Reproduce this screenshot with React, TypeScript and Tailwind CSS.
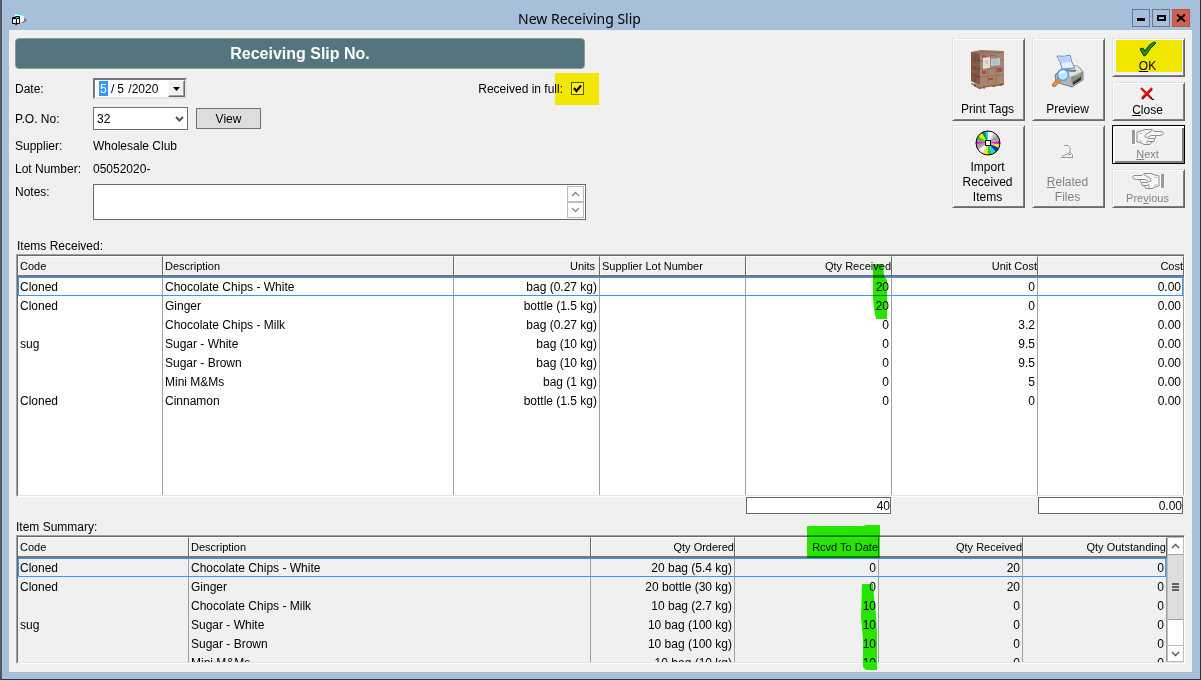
import { useState } from "react";
import type { ReactNode } from "react";
import { clsx } from "clsx";

type Align = "left" | "right";

type Column = {
  title: string;
  width?: string;
  align: Align;
  headPad?: string;
};

const RECEIVED_COLUMNS: Column[] = [
  { title: "Code", width: "w-[145px]", align: "left" },
  { title: "Description", align: "left" },
  { title: "Units", width: "w-[146px]", align: "right", headPad: "pr-[4px]" },
  { title: "Supplier Lot Number", width: "w-[146px]", align: "left" },
  { title: "Qty Received", width: "w-[146px]", align: "right" },
  { title: "Unit Cost", width: "w-[146px]", align: "right" },
  { title: "Cost", width: "w-[146px]", align: "right" },
];

const RECEIVED_ROWS = [
  ["Cloned", "Chocolate Chips - White", "bag (0.27 kg)", "", "20", "0", "0.00"],
  ["Cloned", "Ginger", "bottle (1.5 kg)", "", "20", "0", "0.00"],
  ["", "Chocolate Chips - Milk", "bag (0.27 kg)", "", "0", "3.2", "0.00"],
  ["sug", "Sugar - White", "bag (10 kg)", "", "0", "9.5", "0.00"],
  ["", "Sugar - Brown", "bag (10 kg)", "", "0", "9.5", "0.00"],
  ["", "Mini M&Ms", "bag (1 kg)", "", "0", "5", "0.00"],
  ["Cloned", "Cinnamon", "bottle (1.5 kg)", "", "0", "0", "0.00"],
];

const SUMMARY_COLUMNS: Column[] = [
  { title: "Code", width: "w-[171px]", align: "left" },
  { title: "Description", align: "left" },
  { title: "Qty Ordered", width: "w-[144px]", align: "right" },
  { title: "Rcvd To Date", width: "w-[144px]", align: "right" },
  { title: "Qty Received", width: "w-[144px]", align: "right" },
  { title: "Qty Outstanding", width: "w-[144px]", align: "right" },
];

const SUMMARY_ROWS = [
  ["Cloned", "Chocolate Chips - White", "20 bag (5.4 kg)", "0", "20", "0"],
  ["Cloned", "Ginger", "20 bottle (30 kg)", "0", "20", "0"],
  ["", "Chocolate Chips - Milk", "10 bag (2.7 kg)", "10", "0", "0"],
  ["sug", "Sugar - White", "10 bag (100 kg)", "10", "0", "0"],
  ["", "Sugar - Brown", "10 bag (100 kg)", "10", "0", "0"],
  ["", "Mini M&Ms", "10 bag (10 kg)", "10", "0", "0"],
];

type GridProps = {
  columns: Column[];
  rows: string[][];
  labelledBy: string;
  className?: string;
};

const Grid = ({ columns, rows, labelledBy, className }: GridProps) => (
  <table
    aria-labelledby={labelledBy}
    className={clsx("w-full table-fixed border-separate border-spacing-0", className)}
  >
    <thead>
      <tr className="h-[21px]">
        {columns.map((col) => (
          <th
            key={col.title}
            scope="col"
            className={clsx(
              "h-[21px] border-t border-r border-b-2 border-t-white border-r-[#696969] border-b-[#777777] bg-[#f0f0f0] py-0 pl-[2px] text-[11px] leading-[18px] font-normal whitespace-nowrap",
              "shadow-[inset_1px_0_0_#ffffff]",
              col.width,
              col.align === "right" ? "text-right" : "text-left",
              col.headPad ?? "pr-0"
            )}
          >
            {col.title}
          </th>
        ))}
      </tr>
    </thead>
    <tbody>
      {rows.map((row, r) => (
        <tr key={r} className="h-[19px]">
          {row.map((value, c) => (
            <td
              key={c}
              className={clsx(
                "h-[19px] border-r border-r-[#a0a0a0] pr-[2px] pl-[2px] leading-[15px] whitespace-nowrap",
                r === 0 ? "border-y border-y-[#3399ff] pt-[2px] pb-0" : "pt-[3px] pb-px",
                r === 0 && c === 0 && "shadow-[inset_1px_0_0_#3399ff]",
                r === 0 && c === row.length - 1 && "shadow-[inset_-1px_0_0_#3399ff]",
                columns[c].align === "right" ? "text-right" : "text-left"
              )}
            >
              {value}
            </td>
          ))}
        </tr>
      ))}
      <tr aria-hidden="true">
        {columns.map((col) => (
          <td key={col.title} className="border-r border-r-[#a0a0a0] p-0" />
        ))}
      </tr>
    </tbody>
  </table>
);

const SunkenFrame = ({ children, className }: { children: ReactNode; className: string }) => (
  <div className="border border-t-[#a0a0a0] border-r-white border-b-white border-l-[#a0a0a0]">
    <div
      className={clsx(
        "flex overflow-hidden border-t border-b border-l border-t-[#696969] border-b-[#e3e3e3] border-l-[#696969]",
        className
      )}
    >
      {children}
    </div>
  </div>
);

const Chevron = ({ up = false }: { up?: boolean }) => (
  <svg width="9" height="6" viewBox="0 0 9 6" aria-hidden="true">
    <path
      d={up ? "M1 5 4.5 1.5 8 5" : "M1 1 4.5 4.5 8 1"}
      fill="none"
      stroke="currentColor"
      strokeWidth="1.4"
    />
  </svg>
);

const PalletIcon = () => (
  <svg width="36" height="40" viewBox="0 0 36 40" aria-hidden="true">
    <path d="M1 34 9 39 12 39 12 37 22 36 22 37 34 35 34 31 9 33z" fill="#a98360" />
    <path d="M1 33 9 38 34 34" fill="none" stroke="#7d5b43" strokeWidth="1" />
    <path d="M1 2 10 1 34 1 34 31 10 35 1 31z" fill="#a98470" />
    <path d="M1 2 10 3 10 35 1 31z" fill="#80594a" />
    <path d="M1 2 11 0 33 1 34 3 10 4z" fill="#937363" />
    <path d="M10 11 34 10M10 19 34 18M10 27 34 25M18 4V34M26 3V33" fill="none" stroke="#917060" strokeWidth="1" />
    <path d="M1 9 10 11M1 17 10 19M1 24 10 27M5 3V33" fill="none" stroke="#6c483b" strokeWidth="1" />
    <path d="M3 12 7 13V16L3 15zM2 20 6 21V24L2 23zM12 21H16V24H12zM27 18H32V22H27zM18 28H23V30H18zM12 5H16V7H12zM20 5H24V6H20z" fill="#a8503c" />
    <path d="M13 8 20 7V18L13 19z" fill="#e6e0da" />
    <path d="M21 9 30 8V15L21 16z" fill="#b4c9d2" />
    <path d="M15 11H18M15 13H18M23 11H28M23 13H28" stroke="#a8b4b8" strokeWidth="1" />
    <path d="M5 34V37M14 36V39M24 35V37M31 34V36" stroke="#644637" strokeWidth="1" />
  </svg>
);

const PrinterIcon = () => (
  <svg width="32" height="34" viewBox="0 0 32 34" aria-hidden="true">
    <path d="M7 17 13 12 26 12 31 18 31 26 20 33 4 28 3 21z" fill="#b5b5b5" stroke="#7b7b7b" strokeWidth="1" />
    <path d="M7 17 13 12 26 12 30 18 19 23z" fill="#e0e0e0" />
    <path d="M19 23 30 18V25L20 31z" fill="#8b8b8b" />
    <path d="M21 28 29 23V26L21 31z" fill="#343434" />
    <path d="M23 22 28 20" stroke="#6cd45d" strokeWidth="1.5" />
    <path d="M10 15 25 16 23 18 10 17z" fill="#777a7d" />
    <path d="M5 2Q13 3 18 1Q19 8 23 14L10 15Q9 8 5 2z" fill="#e2efff" stroke="#6889c9" strokeWidth="1" />
    <path d="M7 3Q14 4 17 2Q18 6 19 8L9 9z" fill="#b5d3fc" />
    <path d="M7 26 2 31" stroke="#b4642f" strokeWidth="4" strokeLinecap="round" />
    <path d="M7 26 2 31" stroke="#f38a37" strokeWidth="3" strokeLinecap="round" />
    <circle cx="11" cy="21" r="5.5" fill="#b6e7ff" stroke="#619dde" strokeWidth="1.5" />
    <path d="M8 20Q9 17 13 18" fill="none" stroke="#ffffff" strokeWidth="2" />
  </svg>
);

const DiscIcon = () => (
  <svg width="26" height="26" viewBox="0 0 26 26" aria-hidden="true">
    <circle cx="13" cy="13" r="12" fill="#c9c9c9" />
    <path d="M13 13 6 3A12 12 0 0 1 10 1z" fill="#008080" />
    <path d="M13 13 10 1A12 12 0 0 1 13 1z" fill="#20d8e8" />
    <path d="M13 13 13 1A12 12 0 0 1 19 3z" fill="#ffffff" />
    <path d="M13 13 3 7A12 12 0 0 1 7 3z" fill="#e8ee00" />
    <path d="M13 13 1 10A12 12 0 0 1 3 6z" fill="#35c91d" />
    <path d="M13 13 1 14A12 12 0 0 1 1 11z" fill="#e800e0" />
    <path d="M13 13 2 19A12 12 0 0 1 1 14z" fill="#a2a2a2" />
    <path d="M13 13 7 24A12 12 0 0 1 3 20z" fill="#ffffff" />
    <path d="M13 13 13 25A12 12 0 0 1 9 24z" fill="#e8ee00" />
    <path d="M13 13 17 24A12 12 0 0 1 13 25z" fill="#35c91d" />
    <path d="M13 13 21 22A12 12 0 0 1 17 24z" fill="#20d8e8" />
    <path d="M13 13 24 18A12 12 0 0 1 21 22z" fill="#163aa0" />
    <path d="M13 13 25 14A12 12 0 0 1 24 17z" fill="#e8ee00" />
    <path d="M13 13 25 11A12 12 0 0 1 25 14z" fill="#e800e0" />
    <path d="M13 13 22 5A12 12 0 0 1 25 10z" fill="#a1a1a1" />
    <circle cx="13" cy="13" r="12" fill="none" stroke="#000000" strokeWidth="1" />
    <rect x="10.5" y="10.5" width="5" height="5" fill="#ffffff" stroke="#000000" strokeWidth="1" />
  </svg>
);

const FilesIcon = () => (
  <svg width="16" height="16" viewBox="0 0 16 16" aria-hidden="true">
    <path d="M5 3H9L11 5V8L13 10V15H2" fill="none" stroke="#ffffff" strokeWidth="1" />
    <path d="M4 1.5H8L10 4V8L12.5 10.5V14.5M1 13.5H13M2 12.5 5 11 10 8.5M8 10.5H11" fill="none" stroke="#999999" strokeWidth="1" />
  </svg>
);

const OkIcon = () => (
  <svg width="18" height="16" viewBox="0 0 18 16" aria-hidden="true">
    <path d="M1 8 4 7 6 10Q10 3 15 1L17 2Q11 7 7 14L5 15z" fill="#16a51a" stroke="#083c08" strokeWidth="1" />
    <path d="M3 9 6 13Q9 7 14 3" fill="none" stroke="#4c7d12" strokeWidth="1" strokeDasharray="1 1" />
  </svg>
);

const CloseIcon = () => (
  <svg width="15" height="13" viewBox="0 0 15 13" aria-hidden="true">
    <path d="M2 2 12 12M2 12 12 2" stroke="#5a0000" strokeWidth="2" />
    <path d="M1 1 11 11M2 11 12 1" stroke="#f00c0c" strokeWidth="2" />
    <path d="M12 12.5h2" stroke="#000000" strokeWidth="1" />
  </svg>
);

// Pointing hand, embossed the way disabled buttons draw their picture
const HandIcon = ({ flip = false }: { flip?: boolean }) => (
  <svg width="34" height="18" viewBox="0 0 34 18" aria-hidden="true">
    <g transform={flip ? "matrix(-1 0 0 1 34 0)" : undefined}>
      <path d="M1 2H4V16H1z" fill="#999999" />
      <path d="M4.5 2V16M1 16.5H5" fill="none" stroke="#ffffff" strokeWidth="1" />
      <path
        d="M6 4 10 3 14 1.5H21L23 3.5H30Q32.500 3.500 32.500 5.500Q32 7 29 7.500H24L25 9 23.500 11 23 13.500 20.500 14 19 16.500H13L9 14.500 6 14z"
        fill="#f6f6f6"
        stroke="#8e8e8e"
        strokeWidth="1"
      />
      <path
        d="M21 2.500 18 4.500 14.500 6.500 14 9 16.500 9.500 20 7.500H24M17 10.500H23.500M16 12 17 13.500H22M15 14 17 15"
        fill="none"
        stroke="#8e8e8e"
        strokeWidth="1"
      />
      <path d="M8 5.500H11M8 12.500 11 13.500" fill="none" stroke="#bcbcbc" strokeWidth="1" />
    </g>
  </svg>
);

const FormIcon = () => (
  <svg width="16" height="14" viewBox="0 0 16 14" aria-hidden="true">
    <path d="M13 6 16 8 15 10 11 11H8z" fill="#7b7f86" />
    <path d="M4 1 13 3 13 9 9 11 4 9z" fill="#ffffff" />
    <path d="M4 1.500 8 2 12.500 3.500" fill="none" stroke="#00e0e0" strokeWidth="1" />
    <path d="M1.500 5.500H4.500V4.500H8.500V11.500H5.500V12.500M1.500 5.500V11.500H4.500V12.500H5.500V6.500H8.500M2 6.500H5" fill="#ffffff" stroke="#000000" strokeWidth="1" />
    <path d="M5 5.500H8" stroke="#00c8c8" strokeWidth="1" />
  </svg>
);

type ToolButtonProps = {
  icon: ReactNode;
  children: ReactNode;
  disabled?: boolean;
  focused?: boolean;
  className?: string;
};

const ToolButton = ({ icon, children, disabled, focused, className }: ToolButtonProps) => (
  <button
    type="button"
    disabled={disabled}
    className={clsx(
      "flex w-[73px] flex-col items-center bg-[#f0f0f0] pr-[2px] text-center",
      "border",
      focused
        ? "border-black shadow-[inset_2px_2px_0_#ffffff,inset_-2px_-2px_0_#808080]"
        : "border-t-[#e3e3e3] border-r-[#696969] border-b-[#696969] border-l-[#e3e3e3] shadow-[inset_1px_1px_0_#ffffff,inset_-1px_-1px_0_#808080]",
      disabled && "text-[#838383]",
      className
    )}
  >
    {icon}
    {children}
  </button>
);

const TitleButton = ({ label, close, children }: { label: string; close?: boolean; children: ReactNode }) => (
  <button
    type="button"
    aria-label={label}
    className={clsx(
      "flex h-[18px] w-[18px] items-center justify-center border",
      close ? "border-[#b5544a] bg-[#d0604f]" : "border-[#62779a] bg-[#a7bfdb]"
    )}
  >
    <svg width="10" height="10" viewBox="0 0 10 10" aria-hidden="true">
      {children}
    </svg>
  </button>
);

const TitleBar = () => (
  <header className="flex h-[30px] items-start pr-[10px] pl-[9px]">
    <div className="pt-[12px]">
      <FormIcon />
    </div>
    <h1 className="flex-1 pt-[9px] text-center font-['Noto_Sans',sans-serif] text-[14px] leading-[20px]">
      New Receiving Slip
    </h1>
    <div className="flex gap-[2px] pt-[9px]">
      <TitleButton label="Minimize">
        <path d="M1 5H9V8H1z" />
      </TitleButton>
      <TitleButton label="Maximize">
        <path d="M2 3H9V7H2z" fill="none" stroke="#000000" strokeWidth="2" />
      </TitleButton>
      <TitleButton label="Close window" close>
        <path d="M1 1.5 9 8.5M9 1.5 1 8.5" stroke="#000000" strokeWidth="2" />
      </TitleButton>
    </div>
  </header>
);

const SlipForm = () => {
  const [month, setMonth] = useState("5");
  const [day, setDay] = useState("5");
  const [year, setYear] = useState("2020");
  const [isFull, setIsFull] = useState(true);
  const [notes, setNotes] = useState("");

  return (
    <form className="w-[571px]" onSubmit={(e) => e.preventDefault()}>
      <h2 className="mr-px h-[31px] rounded-[4px] border border-[#8f9a9a] bg-[#53757d] text-center text-[16px] leading-[29px] font-bold text-white">
        Receiving Slip No.
      </h2>

      <div className="mt-[9px] flex h-[21px] items-center pr-[2px]">
        <label htmlFor="slip-month" className="w-[78px]">
          Date:
        </label>
        <div className="flex h-[21px] w-[94px] items-center border-2 border-t-[#777777] border-r-[#e3e3e3] border-b-[#e3e3e3] border-l-[#777777] bg-white pl-[4px]">
          <input
            id="slip-month"
            value={month}
            onChange={(e) => setMonth(e.target.value)}
            className="h-[15px] w-[9px] bg-[#3399ff] pl-px text-white outline-none"
          />
          <span className="pl-[3px]">/</span>
          <input
            aria-label="Day"
            value={day}
            onChange={(e) => setDay(e.target.value)}
            className="ml-[3px] w-[7px] outline-none"
          />
          <span className="pl-[4px]">/</span>
          <input
            aria-label="Year"
            value={year}
            onChange={(e) => setYear(e.target.value)}
            className="w-[29px] outline-none"
          />
          <button
            type="button"
            aria-label="Open calendar"
            className="ml-auto flex h-[17px] w-[17px] items-center justify-center border border-t-white border-r-[#696969] border-b-[#696969] border-l-white bg-[#f0f0f0] shadow-[inset_-1px_-1px_0_#a0a0a0]"
          >
            <svg width="7" height="4" viewBox="0 0 7 4" aria-hidden="true">
              <path d="M0 0H7L3.5 4z" />
            </svg>
          </button>
        </div>
        <label htmlFor="slip-full" className="ml-auto">
          Received in full:
        </label>
        <div className="relative ml-[8px] h-[13px] w-[13px]">
          <input
            id="slip-full"
            type="checkbox"
            checked={isFull}
            onChange={(e) => setIsFull(e.target.checked)}
            className="peer block h-[13px] w-[13px] appearance-none border border-[#555555] bg-white"
          />
          <svg
            width="13"
            height="13"
            viewBox="0 0 13 13"
            aria-hidden="true"
            className="pointer-events-none absolute inset-0 hidden peer-checked:block"
          >
            <path d="M3 6 5.5 9 10 3.5" fill="none" stroke="#000000" strokeWidth="2.2" />
          </svg>
          <div className="pointer-events-none absolute -top-[9px] -left-[16px] h-[32px] w-[44px] bg-[#fff500] mix-blend-multiply" />
        </div>
      </div>

      <div className="mt-[8px] flex h-[23px] items-center">
        <label htmlFor="slip-po" className="w-[78px]">
          P.O. No:
        </label>
        <div className="relative">
          <select
            id="slip-po"
            defaultValue="32"
            className="block h-[23px] w-[95px] appearance-none border border-[#707070] bg-white pl-[3px]"
          >
            <option>32</option>
          </select>
          <svg width="9" height="7" viewBox="0 0 9 7" className="pointer-events-none absolute top-[9px] right-[4px]" aria-hidden="true">
            <path d="M1 1 4.5 4.5 8 1" fill="none" stroke="#555555" strokeWidth="2" />
          </svg>
        </div>
        <button type="button" className="ml-[8px] h-[21px] w-[65px] border border-[#707070] bg-[#dddddd]">
          View
        </button>
      </div>

      <dl className="mt-[5px] grid grid-cols-[78px_1fr] leading-[23px]">
        <dt>Supplier:</dt>
        <dd>Wholesale Club</dd>
        <dt>Lot Number:</dt>
        <dd>05052020-</dd>
      </dl>

      <div className="mt-[3px] flex">
        <label htmlFor="slip-notes" className="w-[78px]">
          Notes:
        </label>
        <div className="flex h-[36px] flex-1 border border-[#696969] bg-white p-px">
          <textarea
            id="slip-notes"
            value={notes}
            onChange={(e) => setNotes(e.target.value)}
            className="flex-1 resize-none outline-none"
          />
          <div className="flex w-[17px] flex-col text-[#888888]">
            <button type="button" aria-label="Scroll notes up" className="flex flex-1 items-center justify-center border border-[#bcbcbc]">
              <Chevron up />
            </button>
            <button type="button" aria-label="Scroll notes down" className="flex flex-1 items-center justify-center border border-[#bcbcbc]">
              <Chevron />
            </button>
          </div>
        </div>
      </div>
    </form>
  );
};

const Toolbar = () => (
  <div className="flex gap-[7px]">
    <div className="flex flex-col gap-[4px]">
      <ToolButton className="h-[83px] pt-[11px]" icon={<PalletIcon />}>
        <span className="mt-[12px] leading-[15px]">Print Tags</span>
      </ToolButton>
      <ToolButton className="h-[83px] pt-[4px]" icon={<DiscIcon />}>
        <span className="mt-[4px] leading-[15px]">
          Import
          <br />
          Received
          <br />
          Items
        </span>
      </ToolButton>
    </div>
    <div className="flex flex-col gap-[4px]">
      <ToolButton className="h-[83px] pt-[15px]" icon={<PrinterIcon />}>
        <span className="mt-[14px] leading-[15px]">Preview</span>
      </ToolButton>
      <ToolButton className="h-[83px] pt-[18px]" icon={<FilesIcon />} disabled>
        <span className="mt-[15px] leading-[15px]">
          <u>R</u>elated
          <br />
          Files
        </span>
      </ToolButton>
    </div>
    <div className="flex flex-col justify-between">
      <div className="relative">
        <ToolButton className="h-[39px] pt-[2px]" icon={<OkIcon />}>
          <span className="mt-[2px] leading-[15px]">
            <u>O</u>K
          </span>
        </ToolButton>
        <div className="pointer-events-none absolute top-[2px] right-[3px] bottom-[5px] left-[4px] bg-[#fff500] mix-blend-multiply" />
      </div>
      <ToolButton className="h-[39px] pt-[4px]" icon={<CloseIcon />}>
        <span className="mt-[3px] leading-[15px]">
          <u>C</u>lose
        </span>
      </ToolButton>
      <ToolButton className="h-[39px] pt-[2px] text-[11px]" icon={<HandIcon />} disabled focused>
        <span className="mt-px leading-[15px]">
          <u>N</u>ext
        </span>
      </ToolButton>
      <ToolButton className="h-[39px] pt-[2px] text-[11px]" icon={<HandIcon flip />} disabled>
        <span className="mt-px leading-[15px]">
          Pre<u>v</u>ious
        </span>
      </ToolButton>
    </div>
  </div>
);

const ItemsReceived = () => (
  <section className="mt-[18px] px-[7px]">
    <h3 id="received-title" className="pl-px leading-[16px]">
      Items Received:
    </h3>
    <div className="relative">
      <SunkenFrame className="h-[241px] bg-white">
        <Grid
          columns={RECEIVED_COLUMNS}
          rows={RECEIVED_ROWS}
          labelledBy="received-title"
          className="h-full"
        />
      </SunkenFrame>
      <svg
        width="14"
        height="56"
        viewBox="0 0 14 56"
        aria-hidden="true"
        className="pointer-events-none absolute top-[10px] right-[298px] mix-blend-multiply"
      >
        <path d="M0 0H10L11 12 14 16V55H3L1 45 0 34z" fill="#26e600" />
      </svg>
    </div>
    <div className="flex justify-end gap-[147px] pr-[2px]">
      <input
        aria-label="Total quantity received"
        readOnly
        value="40"
        className="h-[17px] w-[145px] border border-[#696969] bg-white text-right"
      />
      <input
        aria-label="Total cost"
        readOnly
        value="0.00"
        className="h-[17px] w-[145px] border border-[#696969] bg-white text-right"
      />
    </div>
  </section>
);

const ItemSummary = () => (
  <section className="mt-[5px] px-[7px]">
    <h3 id="summary-title" className="leading-[16px]">
      Item Summary:
    </h3>
    <div className="relative">
      <SunkenFrame className="h-[127px] items-start bg-[#f0f0f0]">
        <Grid columns={SUMMARY_COLUMNS} rows={SUMMARY_ROWS} labelledBy="summary-title" />
        <div className="flex h-full w-[17px] shrink-0 flex-col border-x border-[#bcbcbc] bg-white text-[#555555]">
          <button type="button" aria-label="Scroll up" className="flex h-[17px] items-center justify-center border-t border-[#bcbcbc]">
            <Chevron up />
          </button>
          <div className="flex h-[66px] flex-col items-center justify-center gap-px border-y border-[#a0a0a0] bg-[#dddddd]">
            <span className="h-[2px] w-[7px] bg-[#606060]" />
            <span className="h-[2px] w-[7px] bg-[#606060]" />
            <span className="h-[2px] w-[7px] bg-[#606060]" />
          </div>
          <button type="button" aria-label="Scroll down" className="mt-auto flex h-[17px] items-center justify-center border-y border-[#bcbcbc]">
            <Chevron />
          </button>
        </div>
      </SunkenFrame>
      <svg
        width="74"
        height="35"
        viewBox="0 0 74 35"
        aria-hidden="true"
        className="pointer-events-none absolute -top-[10px] right-[304px] mix-blend-multiply"
      >
        <path d="M0 1H56L60 0H73V33H0z" fill="#28f500" />
      </svg>
      <svg
        width="17"
        height="87"
        viewBox="0 0 17 87"
        aria-hidden="true"
        className="pointer-events-none absolute top-[49px] right-[307px] mix-blend-multiply"
      >
        <path d="M1 0H12L13 12 15 30 16 50V86H5L2 83V55L0 33z" fill="#28f500" />
      </svg>
    </div>
  </section>
);

export default function App() {
  return (
    <div className="flex min-h-screen flex-col border-r border-b border-l-2 border-r-[#30343a] border-b-[#30343a] border-l-[#55585e] bg-[#a6c0dc] font-['Liberation_Sans',Arial,sans-serif] text-[12px] leading-[16px] text-black">
      <TitleBar />
      <main className="mr-[8px] mb-[7px] ml-[7px] flex-1 bg-[#f0f0f0] pt-[8px] pb-[8px]">
        <div className="flex items-start justify-between pr-[7px] pl-[6px]">
          <SlipForm />
          <Toolbar />
        </div>
        <ItemsReceived />
        <ItemSummary />
      </main>
    </div>
  );
}
